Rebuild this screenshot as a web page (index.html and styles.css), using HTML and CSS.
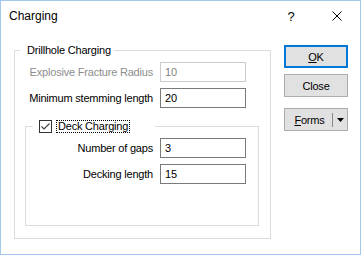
FILE: index.html
```html
<!DOCTYPE html>
<html lang="en">
<head>
  <meta charset="UTF-8" />
  <title>Charging</title>
  <link rel="stylesheet" href="styles.css">
</head>
<body>
  <div class="window">
    <div class="titlebar">
      <span class="title">Charging</span>
      <span class="caption help">?</span>
      <span class="caption">
        <svg width="10" height="10" viewBox="0 0 10 10">
          <path d="M0.5 0.5 L9.5 9.5 M9.5 0.5 L0.5 9.5" stroke="#000" stroke-width="1" fill="none" />
        </svg>
      </span>
    </div>

    <div class="content">
      <div class="group outer">
        <div class="legend">Drillhole Charging</div>
        <div class="row">
          <label class="disabled">Explosive Fracture Radius</label>
          <div class="field disabled">10</div>
        </div>
        <div class="row">
          <label>Minimum stemming length</label>
          <div class="field">20</div>
        </div>

        <div class="group deck">
          <div class="legend">
            <span class="box">
              <svg width="11" height="11" viewBox="0 0 11 11">
                <polyline points="1.5,5.5 4,8 9.5,2.5" stroke="#444" stroke-width="1.2" fill="none" />
              </svg>
            </span>
            <span class="focus">Deck Charging</span>
          </div>
          <div class="row">
            <label>Number of gaps</label>
            <div class="field">3</div>
          </div>
          <div class="row">
            <label>Decking length</label>
            <div class="field">15</div>
          </div>
        </div>
      </div>

      <div class="buttons">
        <div class="btn default"><span><u>O</u>K</span></div>
        <div class="btn">Close</div>
        <div class="btn split">
          <span class="split-text"><u>F</u>orms</span>
          <span class="sep"></span>
          <span class="arrow">
            <svg width="7" height="4" viewBox="0 0 7 4"><polygon points="0,0 7,0 3.5,4" fill="#000" /></svg>
          </span>
        </div>
      </div>
    </div>
  </div>
</body>
</html>
```

FILE: styles.css
```css
body {
  margin: 0;
  font-family: "Liberation Sans", Arial, sans-serif;
  font-size: 11px;
  letter-spacing: -0.2px;
  color: #000;
}

.window {
  width: 361px;
  height: 255px;
  box-sizing: border-box;
  border: 1px solid #a4c8ec;
  background: #fff;
}

.titlebar {
  display: flex;
  align-items: center;
  height: 30px;
  font-size: 12px;
  letter-spacing: 0;
}

.title {
  flex: 1;
  padding-left: 8px;
}

.caption {
  width: 46px;
  height: 30px;
  display: flex;
  align-items: center;
  justify-content: center;
}

.help {
  font-size: 13px;
}

.content {
  display: flex;
  align-items: flex-start;
  padding: 14px 0 0 13px;
}

.group {
  box-sizing: border-box;
  border: 1px solid #dcdcdc;
}

.outer {
  width: 257px;
  height: 189px;
  margin-top: 5px;
}

.legend {
  display: flex;
  align-items: center;
  width: fit-content;
  height: 14px;
  margin-top: -8px;
  background: #fff;
}

.outer > .legend {
  margin-left: 5px;
  padding: 0 3px 0 7px;
}

.row {
  display: flex;
  align-items: center;
  height: 20px;
  margin-top: 6px;
}

.legend + .row {
  margin-top: 5px;
}

label {
  width: 138px;
  margin-right: 7px;
  text-align: right;
}

label.disabled {
  color: #8d8d8d;
}

.field {
  box-sizing: border-box;
  width: 86px;
  height: 20px;
  border: 1px solid #7a7a7a;
  padding-left: 4px;
  line-height: 18px;
}

.field.disabled {
  border-color: #cccccc;
  color: #838383;
}

.deck {
  width: 234px;
  height: 100px;
  margin: 18px 0 0 10px;
}

.deck > .legend {
  box-sizing: border-box;
  width: 122px;
  margin-left: 7px;
  padding-left: 6px;
}

.deck label {
  width: 127px;
}

.box {
  box-sizing: border-box;
  width: 13px;
  height: 13px;
  border: 1px solid #333;
  background: #fff;
  display: flex;
}

.focus {
  margin-left: 4px;
  padding: 0 1px;
  border: 1px dotted #000;
  line-height: 11px;
}

.buttons {
  display: flex;
  flex-direction: column;
  width: 64px;
  margin-left: 13px;
}

.btn {
  box-sizing: border-box;
  height: 23px;
  border: 1px solid #adadad;
  background: #e1e1e1;
  display: flex;
  align-items: center;
  justify-content: center;
}

.btn + .btn {
  margin-top: 6px;
}

.btn.default {
  border: 2px solid #0078d7;
}

.btn.split {
  margin-top: 11px;
  justify-content: flex-start;
}

.split-text {
  flex: 1;
  padding-left: 2px;
  text-align: center;
}

.sep {
  width: 1px;
  height: 14px;
  background: #8a8a8a;
}

.arrow {
  width: 14px;
  display: flex;
  justify-content: center;
}
```
